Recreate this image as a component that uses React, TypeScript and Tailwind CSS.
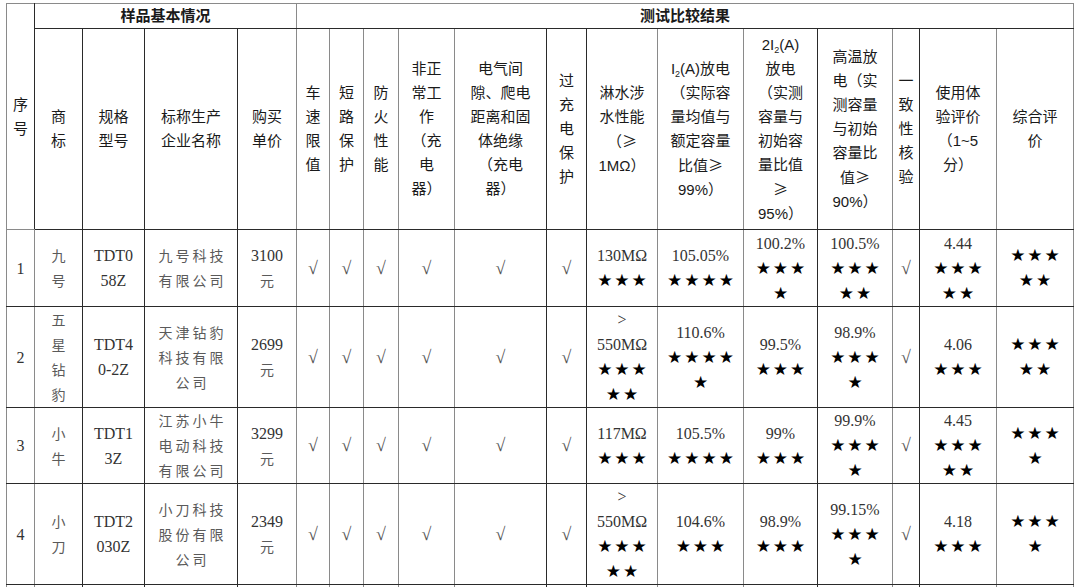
import React from "react";

// column widths, measured from the grid lines of the reference
const cols = [28, 48, 62, 93, 59, 33, 34, 35, 56, 92, 40, 71, 86, 74, 75, 27, 77, 77];

// left edge colour of each column (dark or light rule)
const dark = "border-[#2a2a2a]";
const light = "border-[#8a8a8a]";
const leftRule = [light, dark, dark, dark, light, light, light, light, light, dark, dark, light, light, dark, light, dark, light, light];

const I2 = () => (
  <>
    I<sub className="text-[9px] align-baseline relative top-[3px]">2</sub>
  </>
);

// the wide CJK form of ≥ used in the header
const Ge = () => <span className="font-['Noto_Sans_CJK_SC',sans-serif]">≥</span>;

const headers: React.ReactNode[][] = [
  [],
  [["商"], ["标"]],
  [["规格"], ["型号"]],
  [["标称生产"], ["企业名称"]],
  [["购买"], ["单价"]],
  [["车"], ["速"], ["限"], ["值"]],
  [["短"], ["路"], ["保"], ["护"]],
  [["防"], ["火"], ["性"], ["能"]],
  [["非正"], ["常工"], ["作"], ["（充"], ["电"], ["器）"]],
  [["电气间"], ["隙、爬电"], ["距离和固"], ["体绝缘"], ["（充电"], ["器）"]],
  [["过"], ["充"], ["电"], ["保"], ["护"]],
  [["淋水涉"], ["水性能"], [<span key="g">（<Ge /></span>], ["1MΩ）"]],
  [
    [<span key="a"><I2 />(A)放电</span>],
    ["（实际容"],
    ["量均值与"],
    ["额定容量"],
    [<span key="g">比值<Ge /></span>],
    ["99%）"],
  ],
  [
    [<span key="b">2<I2 />(A)</span>],
    ["放电"],
    ["（实测"],
    ["容量与"],
    ["初始容"],
    ["量比值"],
    [<Ge key="g" />],
    ["95%）"],
  ],
  [["高温放"], ["电（实"], ["测容量"], ["与初始"], ["容量比"], [<span key="g">值<Ge /></span>], ["90%）"]],
  [["一"], ["致"], ["性"], ["核"], ["验"]],
  [["使用体"], ["验评价"], ["（1~5"], ["分）"]],
  [["综合评"], ["价"]],
];

type Row = { h: string; cells: string[][] };

const ok = ["√"];
const rows: Row[] = [
  {
    h: "h-[77px]",
    cells: [
      ["1"],
      ["九", "号"],
      ["TDT0", "58Z"],
      ["九号科技", "有限公司"],
      ["3100", "元"],
      ok, ok, ok, ok, ok, ok,
      ["130MΩ", "★★★"],
      ["105.05%", "★★★★"],
      ["100.2%", "★★★", "★"],
      ["100.5%", "★★★", "★★"],
      ok,
      ["4.44", "★★★", "★★"],
      ["★★★", "★★"],
    ],
  },
  {
    h: "h-[101px]",
    cells: [
      ["2"],
      ["五", "星", "钻", "豹"],
      ["TDT4", "0-2Z"],
      ["天津钻豹", "科技有限", "公司"],
      ["2699", "元"],
      ok, ok, ok, ok, ok, ok,
      [">", "550MΩ", "★★★", "★★"],
      ["110.6%", "★★★★", "★"],
      ["99.5%", "★★★"],
      ["98.9%", "★★★", "★"],
      ok,
      ["4.06", "★★★"],
      ["★★★", "★★"],
    ],
  },
  {
    h: "h-[76px]",
    cells: [
      ["3"],
      ["小", "牛"],
      ["TDT1", "3Z"],
      ["江苏小牛", "电动科技", "有限公司"],
      ["3299", "元"],
      ok, ok, ok, ok, ok, ok,
      ["117MΩ", "★★★"],
      ["105.5%", "★★★★"],
      ["99%", "★★★"],
      ["99.9%", "★★★", "★"],
      ok,
      ["4.45", "★★★", "★★"],
      ["★★★", "★"],
    ],
  },
  {
    h: "h-[100px]",
    cells: [
      ["4"],
      ["小", "刀"],
      ["TDT2", "030Z"],
      ["小刀科技", "股份有限", "公司"],
      ["2349", "元"],
      ok, ok, ok, ok, ok, ok,
      [">", "550MΩ", "★★★", "★★"],
      ["104.6%", "★★★"],
      ["98.9%", "★★★"],
      ["99.15%", "★★★", "★"],
      ok,
      ["4.18", "★★★"],
      ["★★★", "★"],
    ],
  },
];

const cjk = /[\u4e00-\u9fff]/;

function Line({ text }: { text: string }) {
  if (text.startsWith("★")) {
    return (
      <div className="font-['DejaVu_Sans',sans-serif] text-[17px] leading-[25px] tracking-[2px] pl-[2px] text-black">
        {text}
      </div>
    );
  }
  if (text === "√") {
    return <div className="text-[18px] leading-[25px] text-[#555]">{text}</div>;
  }
  if (cjk.test(text)) {
    return (
      <div className="font-['Noto_Sans_CJK_SC',sans-serif] text-[14px] leading-[25px] tracking-[3px] pl-[3px] text-[#5a5a5a]">
        {text}
      </div>
    );
  }
  return <div className="text-[16px] leading-[25px] text-[#333]">{text}</div>;
}

export default function App() {
  return (
    <div className="min-h-screen bg-white pt-[3px] pl-[6px]">
      <table className="table-fixed border-collapse border border-[#8a8a8a] font-['Liberation_Serif','Noto_Sans_CJK_SC',serif]">
        <colgroup>
          {cols.map((w, i) => (
            <col key={i} style={{ width: w }} />
          ))}
        </colgroup>
        <thead className="font-['Liberation_Sans','Noto_Sans_CJK_SC',sans-serif] text-[15px] leading-[24px] text-[#1a1a1a]">
          <tr className="h-[25px]">
            <th rowSpan={2} className={`border border-t-[#8a8a8a] ${light} border-r-[#2a2a2a] font-normal p-0`}>
              <div>序</div>
              <div>号</div>
            </th>
            <th colSpan={4} className={`border ${dark} border-t-[#8a8a8a] border-r-[#8a8a8a] font-bold p-0 leading-[20px]`}>
              样品基本情况
            </th>
            <th colSpan={13} className={`border ${dark} border-t-[#8a8a8a] border-l-[#8a8a8a] border-r-[#8a8a8a] font-bold p-0 leading-[20px]`}>
              测试比较结果
            </th>
          </tr>
          <tr className="h-[201px]">
            {headers.slice(1).map((lines, i) => (
              <th
                key={i}
                className={`border border-y-[#2a2a2a] ${leftRule[i + 1]} ${i === 16 ? "border-r-[#8a8a8a]" : ""} font-normal p-0 align-middle`}
              >
                {lines.map((l, j) => (
                  <div key={j} className="whitespace-nowrap">
                    {l}
                  </div>
                ))}
              </th>
            ))}
          </tr>
        </thead>
        <tbody>
          {rows.map((r, ri) => (
            <tr key={ri} className={r.h}>
              {r.cells.map((lines, ci) => (
                <td
                  key={ci}
                  className={`border border-y-[#2a2a2a] ${leftRule[ci]} ${ci === 17 ? "border-r-[#8a8a8a]" : ""} p-0 text-center align-middle`}
                >
                  {lines.map((t, k) => (
                    <Line key={k} text={t} />
                  ))}
                </td>
              ))}
            </tr>
          ))}
          <tr className="h-[30px]">
            {cols.map((_, ci) => (
              <td key={ci} className={`border border-t-[#2a2a2a] ${leftRule[ci]} p-0`} />
            ))}
          </tr>
        </tbody>
      </table>
    </div>
  );
}
